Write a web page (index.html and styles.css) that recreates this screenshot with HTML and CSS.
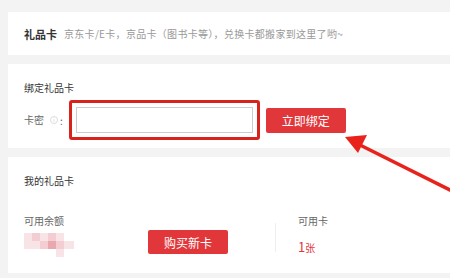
FILE: index.html
```html
<!DOCTYPE html>
<html lang="zh-CN">
<head>
<meta charset="utf-8">
<link rel="stylesheet" href="styles.css">
</head>
<body>
<div class="page">
  <section class="panel head">
    <span class="head-title">礼品卡</span>
    <span class="head-desc">京东卡/E卡，京品卡（图书卡等），兑换卡都搬家到这里了哟~</span>
  </section>

  <section class="panel bind">
    <div class="title">绑定礼品卡</div>
    <div class="bind-row">
      <span class="label">卡密</span>
      <span class="info">i</span>
      <span class="colon">:</span>
      <div class="highlight"><input class="code-input" type="text"></div>
      <button class="btn btn-bind">立即绑定</button>
    </div>
  </section>

  <section class="panel mine">
    <div class="title">我的礼品卡</div>
    <div class="stats">
      <div class="balance">
        <div class="label">可用余额</div>
        <div class="mosaic">
          <i class="m1"></i><i class="m2"></i><i class="m1"></i><i class="m2"></i><i class="m1"></i><i class="m0"></i>
          <i class="m1"></i><i class="m1"></i><i class="m2"></i><i class="m3"></i><i class="m2"></i><i class="m1"></i>
          <i class="m0"></i><i class="m0"></i><i class="m0"></i><i class="m0"></i><i class="m1"></i><i class="m0"></i>
        </div>
      </div>
      <button class="btn btn-buy">购买新卡</button>
      <div class="divider"></div>
      <div class="cards">
        <div class="label">可用卡</div>
        <div class="count"><b>1</b>张</div>
      </div>
    </div>
  </section>

  <svg class="arrow" width="450" height="278" viewBox="0 0 450 278">
    <line x1="452" y1="191" x2="356" y2="143" stroke="#e8231b" stroke-width="3.5"/>
    <polygon points="345,137 367,135 358,153" fill="#e8231b"/>
  </svg>
</div>
</body>
</html>
```

FILE: styles.css
```css
* { box-sizing: border-box; }
html, body { margin: 0; padding: 0; }
body {
  background: #f3f3f3;
  font-family: "Noto Sans CJK SC", "Microsoft YaHei", sans-serif;
  font-size: 10px;
  color: #666;
  width: 450px;
  height: 278px;
  overflow: hidden;
}
.page {
  position: relative;
  padding: 12px 0 0 8px;
  height: 278px;
}
.panel {
  background: #fff;
  width: 460px;
  padding: 0 16px;
}
.head {
  height: 43px;
  display: flex;
  align-items: center;
  margin-bottom: 9px;
}
.head-title {
  font-weight: bold;
  color: #333;
  font-size: 11px;
  margin-right: 7px;
}
.head-desc {
  color: #999;
  font-size: 10px;
  letter-spacing: 0.3px;
}
.title {
  color: #333;
  line-height: 16px;
  height: 16px;
  font-size: 10px;
}
.bind {
  height: 84px;
  padding-top: 16px;
  margin-bottom: 9px;
}
.bind-row {
  display: flex;
  align-items: center;
  margin-top: 4px;
}
.label { color: #666; line-height: 16px; font-size: 10px; }
.info {
  width: 8px;
  height: 8px;
  border: 1px solid #ddd;
  border-radius: 50%;
  font-size: 5px;
  line-height: 6px;
  text-align: center;
  color: #ccc;
  margin-left: 6px;
}
.colon { color: #666; margin-left: 2px; margin-right: 6px; }
.highlight {
  width: 191px;
  height: 40px;
  border: 3px solid #d9221c;
  border-radius: 3px;
  padding: 4px;
}
.code-input {
  display: block;
  width: 100%;
  height: 100%;
  border: 1px solid #ccc;
  margin: 0;
  padding: 0 4px;
  outline: none;
  background: #fff;
}
.btn {
  border: none;
  border-radius: 2px;
  background: #e1373b;
  color: #fff;
  font-family: "Noto Sans CJK SC", sans-serif;
  font-size: 12px;
  padding: 0;
  cursor: pointer;
}
.btn-bind {
  width: 80px;
  height: 25px;
  margin-left: 6px;
}
.mine {
  height: 116px;
  padding-top: 16px;
}
.stats {
  display: flex;
  align-items: flex-start;
  margin-top: 24px;
}
.balance { width: 124px; }
.mosaic {
  display: grid;
  grid-template-columns: repeat(5, 8px) 10px;
  grid-auto-rows: 8px;
  margin-top: 4px;
  width: 50px;
}
.mosaic i { display: block; }
.m0 { background: #fff; }
.m1 { background: #f8e3e6; }
.m2 { background: #f3cdd2; }
.m3 { background: #e9a8b0; }
.btn-buy {
  width: 80px;
  height: 24px;
  margin-top: 17px;
}
.divider {
  width: 1px;
  height: 29px;
  background: #eee;
  margin-left: 47px;
  margin-top: 10px;
}
.cards { margin-left: 22px; }
.count {
  color: #e1373b;
  margin-top: 10px;
  font-size: 10px;
  line-height: 16px;
}
.count b { font-weight: normal; font-size: 13px; }
.arrow {
  position: absolute;
  left: 0;
  top: 0;
  pointer-events: none;
}
```
